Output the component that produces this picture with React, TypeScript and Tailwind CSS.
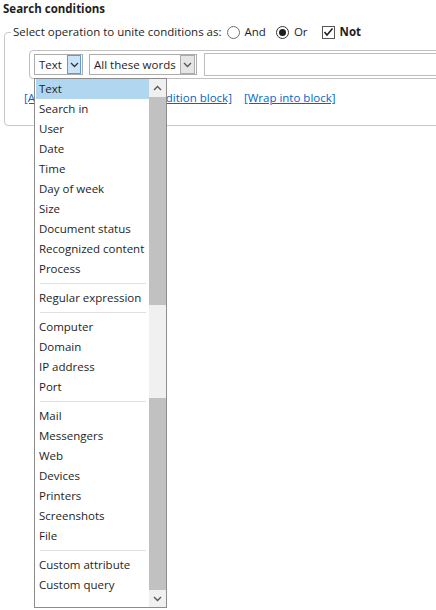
import React from "react";

type Entry = { label: string } | { sep: true };

const ITEMS: Entry[] = [
  { label: "Text" },
  { label: "Search in" },
  { label: "User" },
  { label: "Date" },
  { label: "Time" },
  { label: "Day of week" },
  { label: "Size" },
  { label: "Document status" },
  { label: "Recognized content" },
  { label: "Process" },
  { sep: true },
  { label: "Regular expression" },
  { sep: true },
  { label: "Computer" },
  { label: "Domain" },
  { label: "IP address" },
  { label: "Port" },
  { sep: true },
  { label: "Mail" },
  { label: "Messengers" },
  { label: "Web" },
  { label: "Devices" },
  { label: "Printers" },
  { label: "Screenshots" },
  { label: "File" },
  { sep: true },
  { label: "Custom attribute" },
  { label: "Custom query" },
];

function Chevron({ className = "" }: { className?: string }) {
  return (
    <svg width="9" height="6" viewBox="0 0 9 6" className={className}>
      <path d="M1 1 L4.5 4.5 L8 1" fill="none" stroke="currentColor" strokeWidth="1.3" />
    </svg>
  );
}

export default function App() {
  return (
    <div className="relative w-[436px] h-[610px] overflow-hidden bg-white text-[11.5px] text-[#1e1e1e] font-['Open_Sans','Noto_Sans',sans-serif]">
      <div className="pl-[3px] pt-[1px] h-[20px] font-bold leading-[16px]">Search conditions</div>

      <fieldset className="ml-[4px] mt-[4px] w-[460px] h-[102px] border border-[#c8c8c8] rounded-[4px] pl-[6px]">
        <legend className="w-[440px] px-[2px] leading-[16px] flex items-center">
          <span>Select operation to unite conditions as:</span>
          <span className="ml-[5px] w-[13px] h-[13px] rounded-full border border-[#6e6e6e] bg-white" />
          <span className="ml-[5px]">And</span>
          <span className="ml-[10px] w-[13px] h-[13px] rounded-full border border-[#333] bg-white flex items-center justify-center">
            <span className="w-[7px] h-[7px] rounded-full bg-[#1e1e1e]" />
          </span>
          <span className="ml-[5px]">Or</span>
          <span className="ml-[14px] w-[13px] h-[13px] border border-[#555] bg-white flex items-center justify-center">
            <svg width="11" height="10" viewBox="0 0 11 10">
              <path d="M1.5 5 L4 8 L9.5 1.5" fill="none" stroke="#1e1e1e" strokeWidth="1.5" />
            </svg>
          </span>
          <span className="ml-[5px] font-bold">Not</span>
        </legend>

        <div className="ml-[18px] mt-[10px] h-[29px] border border-[#c0c0c0] rounded-l-[4px] flex items-center pl-[4px] gap-[6px]">
          <div className="w-[49px] h-[21px] border border-[#acacac] flex items-center pl-[4px] justify-between pr-[1px]">
            <span>Text</span>
            <span className="w-[14px] h-[19px] bg-[#cce4f7] border border-[#569de5] flex items-center justify-center text-[#333]">
              <Chevron />
            </span>
          </div>
          <div className="w-[108px] h-[21px] border border-[#acacac] flex items-center pl-[4px] justify-between pr-[1px]">
            <span>All these words</span>
            <span className="w-[15px] h-[19px] bg-[#e5e5e5] border border-[#acacac] flex items-center justify-center text-[#555]">
              <Chevron />
            </span>
          </div>
          <div className="ml-[1px] flex-1 h-[23px] border border-[#bdbdbd]" />
        </div>

        <div className="mt-[10px] ml-[13px] flex gap-[12px] text-[#0066cc] underline">
          <span>[Add condition]</span>
          <span>[Add condition block]</span>
          <span>[Wrap into block]</span>
        </div>
      </fieldset>

      <div className="absolute left-[34px] top-[78px] w-[133px] h-[530px] border border-[#8c8c8c] bg-white flex">
        <div className="flex-1 pl-[1px] flex flex-col">
          {ITEMS.map((it, i) =>
            "sep" in it ? (
              <div key={i} className="h-[9px] flex items-center pl-[4px] pr-[3px]">
                <div className="w-full h-px bg-[#e0e0e0]" />
              </div>
            ) : (
              <div
                key={i}
                className={`h-[20px] leading-[20px] pl-[3px] ${i === 0 ? "bg-[#b1d6f0]" : ""}`}
              >
                {it.label}
              </div>
            )
          )}
        </div>
        <div className="w-[17px] flex flex-col bg-[#f0f0f0]">
          <div className="h-[18px] flex items-center justify-center text-[#555]">
            <Chevron className="rotate-180" />
          </div>
          <div className="h-[208px] bg-[#c1c1c1]" />
          <div className="h-[93px]" />
          <div className="h-[192px] bg-[#c1c1c1]" />
          <div className="flex-1 flex items-center justify-center text-[#555]">
            <Chevron />
          </div>
        </div>
      </div>
    </div>
  );
}
